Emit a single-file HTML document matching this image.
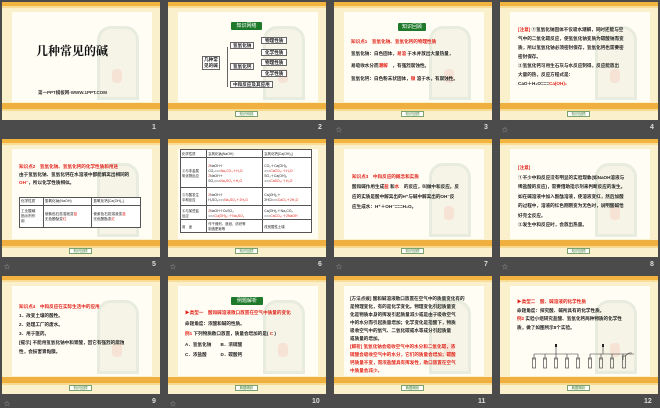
<!DOCTYPE html>
<html><head><meta charset="utf-8"><style>
*{margin:0;padding:0;box-sizing:border-box}
body{width:660px;height:407px;background:#4b4b4b;position:relative;overflow:hidden;font-family:"Liberation Sans","Noto Sans CJK SC",sans-serif}
.s{position:absolute;width:158px;height:118px;background:#fbf0cc;overflow:hidden}
.s .t{position:absolute;left:0;top:0;width:158px;height:4px;background:#f2b33f}
.s .t2{position:absolute;left:0;top:4px;width:158px;height:2px;background:#f9dc96}
.s .p{position:absolute;left:10px;top:10px;width:140px;height:90px;background:#fffdf4}
.s .b{position:absolute;left:0;top:101px;width:158px;height:6px;background:#f0b040}
.s .b2{position:absolute;left:0;top:107px;width:158px;height:2px;background:#f7d98f}
.s .btn{position:absolute;left:67px;top:109px;width:23px;height:6px;border:1px solid #7aa26c;background:#fff;font-size:3.5px;color:#3a7a2e;text-align:center;line-height:4px}
.s .deco{position:absolute;left:95px;top:24px;width:42px;height:74px;border:3px solid #dfe6d6;border-radius:14px 14px 0 0;background:#f1f1e2;opacity:.7}
.s .deco::after{content:"";position:absolute;left:12px;top:40px;width:10px;height:14px;background:#f3d9c8;border-radius:4px}
.n{position:absolute;color:#ddd;font-size:7px;font-weight:bold}
.st{position:absolute;color:#aaa;font-size:6px}
.tx{position:absolute;font-size:4.6px;line-height:7.5px;color:#222;white-space:nowrap;font-weight:bold}
.r{color:#e2231a}
.gb{position:absolute;background:#1e7a2a;color:#fff;font-size:5px;text-align:center;border-radius:1px;line-height:8px}
table{position:absolute;border-collapse:collapse;font-size:3.6px;color:#222;background:#fff}
td{border:0.6px solid #555;padding:1px}
</style></head><body>

<!-- Row 1 -->
<div class="s" style="left:2px;top:2px"><div class="t"></div><div class="t2"></div><div class="p"></div><div class="deco"></div><div class="b"></div><div class="b2"></div>
<div style="position:absolute;left:34px;top:40px;font-size:12px;font-weight:bold;color:#111;font-family:'Liberation Serif','Noto Serif CJK SC',serif">几种常见的碱</div>
<div style="position:absolute;left:36px;top:88px;font-size:4.5px;font-weight:bold;color:#333">第一PPT模板网-WWW.1PPT.COM</div></div>
<div class="n" style="left:152px;top:124px">1</div>

<div class="s" style="left:168px;top:2px"><div class="t"></div><div class="t2"></div><div class="p"></div><div class="deco"></div><div class="b"></div><div class="b2"></div>
<div class="gb" style="left:63px;top:20px;width:31px">知识网络</div>
<div class="tx" style="left:34px;top:54px;border:0.6px solid #666;line-height:6px;padding:0 1px;background:#fff">几种常<br>见的碱</div>
<div style="position:absolute;left:59px;top:45px;width:1px;height:40px;background:#666"></div>
<div class="tx" style="left:62px;top:40px;border:0.6px solid #666;line-height:5px;padding:0 2px;background:#fff">氢氧化钠</div>
<div class="tx" style="left:62px;top:61px;border:0.6px solid #666;line-height:5px;padding:0 2px;background:#fff">氢氧化钙</div>
<div class="tx" style="left:62px;top:79px;border:0.6px solid #666;line-height:5px;padding:0 2px;background:#fff">中和反应及其应用</div>
<div class="tx" style="left:93px;top:35px;border:0.6px solid #666;line-height:5px;padding:0 3px;background:#fff">物理性质</div>
<div class="tx" style="left:93px;top:47px;border:0.6px solid #666;line-height:5px;padding:0 3px;background:#fff">化学性质</div>
<div class="tx" style="left:93px;top:57px;border:0.6px solid #666;line-height:5px;padding:0 3px;background:#fff">物理性质</div>
<div class="tx" style="left:93px;top:68px;border:0.6px solid #666;line-height:5px;padding:0 3px;background:#fff">化学性质</div>
<div class="btn">知识网络</div></div>
<div class="n" style="left:318px;top:124px">2</div>

<div class="s" style="left:334px;top:2px"><div class="t"></div><div class="t2"></div><div class="p"></div><div class="deco"></div><div class="b"></div><div class="b2"></div>
<div class="gb" style="left:64px;top:21px;width:28px">知识回顾</div>
<div class="tx r" style="left:17px;top:36px">知识点1　氢氧化钠、氢氧化钙的物理性质</div>
<div class="tx" style="left:17px;top:48px">氢氧化钠：白色固体，<span class="r">易溶</span> 于水并放出大量热量，</div>
<div class="tx" style="left:17px;top:60px">易吸收水分而<span class="r">潮解</span>　，有强烈腐蚀性。</div>
<div class="tx" style="left:17px;top:73px">氢氧化钙：白色粉末状固体，<span class="r">微</span> 溶于水，有腐蚀性。</div>
<div class="btn">知识回顾</div></div>
<div class="st" style="left:336px;top:125px">☆</div><div class="n" style="left:484px;top:124px">3</div>

<div class="s" style="left:500px;top:2px"><div class="t"></div><div class="t2"></div><div class="p"></div><div class="deco"></div><div class="b"></div><div class="b2"></div>
<div class="tx" style="left:18px;top:23px;line-height:9px"><span class="r">[注意]</span> ①氢氧化钠固体不仅吸水潮解，同时还能与空<br>气中的二氧化碳反应，使氢氧化钠变质为碳酸钠而变<br>质，所以氢氧化钠必须密封保存，氢氧化钙也需要密<br>密封保存。<br>②氢氧化钙可用生石灰与水反应制得，反应能放出<br>大量的热，反应方程式是：<br>CaO＋H₂O===<span class="r">Ca(OH)₂</span></div>
<div class="btn">知识回顾</div></div>
<div class="st" style="left:502px;top:125px">☆</div><div class="n" style="left:650px;top:124px">4</div>

<!-- Row 2 -->
<div class="s" style="left:2px;top:139px"><div class="t"></div><div class="t2"></div><div class="p"></div><div class="deco"></div><div class="b"></div><div class="b2"></div>
<div class="tx" style="left:17px;top:24px;line-height:8px"><span class="r">知识点2　氢氧化钠、氢氧化钙的化学性质和用途</span><br>由于氢氧化钠、氢氧化钙在水溶液中都能解离出相同的<br><span class="r">OH⁻</span>，所以化学性质相似。</div>
<table style="left:17px;top:58px;width:122px"><tr><td>化学性质</td><td>氢氧化钠(NaOH)</td><td>氢氧化钙[Ca(OH)₂]</td></tr><tr><td style="height:22px">工业酸碱<br>指示剂作<br>用</td><td>使紫色石蕊溶液变<span class="r">蓝</span><br>无色酚酞变<span class="r">红</span></td><td>使紫色石蕊溶液变<span class="r">蓝</span><br>无色酚酞变<span class="r">红</span></td></tr></table>
<div class="btn">知识回顾</div></div>
<div class="st" style="left:4px;top:262px">☆</div><div class="n" style="left:152px;top:261px">5</div>

<div class="s" style="left:168px;top:139px"><div class="t"></div><div class="t2"></div><div class="p"></div><div class="b"></div><div class="b2"></div>
<table style="left:12px;top:10px;width:132px;font-size:3.4px"><tr><td>化学性质</td><td>氢氧化钠(NaOH)</td><td>氢氧化钙[Ca(OH)₂]</td></tr>
<tr><td style="height:30px">②与非金属<br>氧化物反应</td><td><span class="r">2</span>NaOH＋<br>CO₂===<span class="r">Na₂CO₃＋H₂O</span><br><span class="r">2</span>NaOH＋<br>SO₂===<span class="r">Na₂SO₃＋H₂O</span></td><td>CO₂＋Ca(OH)₂<br>===<span class="r">CaCO₃↓＋H₂O</span><br>SO₂＋Ca(OH)₂<br>===<span class="r">CaSO₃↓＋H₂O</span></td></tr>
<tr><td style="height:18px">③与酸发生<br>中和反应</td><td><span class="r">2</span>NaOH＋<br>H₂SO₄===<span class="r">Na₂SO₄＋2H₂O</span></td><td>Ca(OH)₂＋<br>2HCl===<span class="r">CaCl₂＋2H₂O</span></td></tr>
<tr><td style="height:14px">④与某些盐<br>反应</td><td><span class="r">2</span>NaOH＋CuSO₄<br>===<span class="r">Cu(OH)₂↓＋Na₂SO₄</span></td><td>Ca(OH)₂＋Na₂CO₃<br>===<span class="r">CaCO₃↓＋2NaOH</span></td></tr>
<tr><td style="height:13px">用　途</td><td>作干燥剂，造纸、纺织等<br>制造肥皂等</td><td>改良酸性土壤</td></tr></table>
<div class="btn">知识回顾</div></div>
<div class="st" style="left:170px;top:262px">☆</div><div class="n" style="left:318px;top:261px">6</div>

<div class="s" style="left:334px;top:139px"><div class="t"></div><div class="t2"></div><div class="p"></div><div class="deco"></div><div class="b"></div><div class="b2"></div>
<div class="tx" style="left:18px;top:33px;line-height:10px"><span class="r">知识点3　中和反应的概念和实质</span><br>酸和碱作用生成<span class="r">盐</span> 和<span class="r">水</span>　的反应，叫做中和反应。反<br>应的实质是酸中解离出的H⁺与碱中解离出的OH⁻反<br>应生成水：H⁺＋OH⁻===H₂O。</div>
<div class="btn">知识回顾</div></div>
<div class="st" style="left:336px;top:262px">☆</div><div class="n" style="left:484px;top:261px">7</div>

<div class="s" style="left:500px;top:139px"><div class="t"></div><div class="t2"></div><div class="p"></div><div class="deco"></div><div class="b"></div><div class="b2"></div>
<div class="tx" style="left:18px;top:24px;line-height:9.5px"><span class="r">[注意]</span><br>①不少中和反应没有明显的实验现象(如NaOH溶液与<br>稀盐酸的反应)，需要借助指示剂来判断反应的发生。<br>如在碱溶液中加入酚酞溶液，使溶液变红，然后加酸<br>的过程中，溶液的红色刚刚变为无色时，说明酸碱恰<br>好完全反应。<br>②发生中和反应时，会放出热量。</div>
<div class="btn">知识回顾</div></div>
<div class="st" style="left:502px;top:262px">☆</div><div class="n" style="left:650px;top:261px">8</div>

<!-- Row 3 -->
<div class="s" style="left:2px;top:276px"><div class="t"></div><div class="t2"></div><div class="p"></div><div class="deco"></div><div class="b"></div><div class="b2"></div>
<div class="tx" style="left:17px;top:26px;line-height:9px"><span class="r">知识点4　中和反应在实际生活中的应用</span><br>1．改变土壤的酸性。<br>2．处理工厂的废水。<br>3．用于医药。<br>[提示] 不能用氢氧化钠中和胃酸，因它有强烈的腐蚀<br>性，会损害胃黏膜。</div>
<div class="btn">知识回顾</div></div>
<div class="st" style="left:4px;top:399px">☆</div><div class="n" style="left:152px;top:398px">9</div>

<div class="s" style="left:168px;top:276px"><div class="t"></div><div class="t2"></div><div class="p"></div><div class="deco"></div><div class="b"></div><div class="b2"></div>
<div class="gb" style="left:63px;top:21px;width:32px">例题解析</div>
<div class="tx" style="left:17px;top:32px;line-height:10.5px"><span class="r">▶类型一　酸和碱溶液敞口放置在空气中质量的变化</span><br>命题角度：浓酸和碱的性质。<br><span class="r">例1</span> 下列物质敞口放置，质量会增加的是(  <span class="r">C</span>  )<br>A．氢氧化钠　　B．浓硫酸<br>C．浓盐酸　　　D．碳酸钙</div>
<div class="btn">典题精析</div></div>
<div class="st" style="left:170px;top:399px">☆</div><div class="n" style="left:312px;top:398px">10</div>

<div class="s" style="left:334px;top:276px"><div class="t"></div><div class="t2"></div><div class="p"></div><div class="deco"></div><div class="b"></div><div class="b2"></div>
<div class="tx" style="left:16px;top:19px;line-height:8px">[方法点拨] 酸和碱溶液敞口放置在空气中的质量变化有的<br>是物理变化，有的是化学变化。物理变化引起质量变<br>化是物质本身的挥发引起质量减少或是由于吸收空气<br>中的水分而引起质量增加；化学变化是指酸下，物质<br>吸收空气中的氧气、二氧化碳或水等成分引起质量<br>或质量的增加。<br><span class="r">[解析] 氢氧化钠会吸收空气中的水分和二氧化碳，浓<br>硫酸会吸收空气中的水分，它们的质量会增加；碳酸<br>钙质量不变，而浓盐酸具有挥发性，敞口放置在空气<br>中质量会减少。</span></div>
<div class="btn">典题精析</div></div>
<div class="n" style="left:478px;top:398px">11</div>

<div class="s" style="left:500px;top:276px"><div class="t"></div><div class="t2"></div><div class="p"></div><div class="deco"></div><div class="b"></div><div class="b2"></div>
<div class="tx" style="left:17px;top:22px;line-height:8.5px"><span class="r">▶类型二　酸、碱溶液的化学性质</span><br>命题角度：探究酸、碱所具有的化学性质。<br><span class="r">例2</span> 实验小组研究盐酸、氢氧化钙两种物质的化学性<br>质，做了如图所示8个实验。</div>
<svg style="position:absolute;left:30px;top:68px" width="110" height="32" viewBox="0 0 110 32">
<g stroke="#333" stroke-width="0.6" fill="none">
<path d="M26 2v8M4 10h44M4 10v6M15 10v6M26 10v6M37 10v6M48 10v6M73 2v8M60 10h44M60 10v6M71 10v6M82 10v6M93 10v6"/>
<rect x="2.5" y="14" width="3" height="10"/><rect x="13.5" y="14" width="3" height="10"/><rect x="24.5" y="14" width="3" height="10"/><rect x="35.5" y="14" width="3" height="10"/><rect x="46.5" y="14" width="3" height="10"/><rect x="58.5" y="14" width="3" height="10"/><rect x="69.5" y="14" width="3" height="10"/><rect x="80.5" y="14" width="3" height="10"/><rect x="92.5" y="12" width="3" height="12"/><path d="M95 12l4-3h3"/>
</g><rect x="25" y="0" width="2" height="3" fill="#222"/><rect x="72" y="0" width="2" height="3" fill="#222"/></svg>
<div class="btn">典题精析</div></div>
<div class="n" style="left:644px;top:398px">12</div>
</body></html>
